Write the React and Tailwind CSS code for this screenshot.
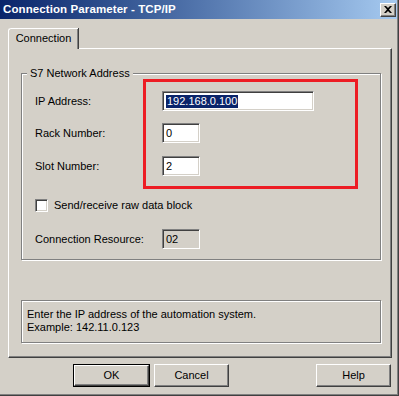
import React from "react";

const FONT = "font-['Liberation_Sans',Arial,sans-serif]";

function Sunken({ className = "", children }) {
  return (
    <div
      className={`border border-t-[#808080] border-l-[#808080] border-r-white border-b-white shadow-[inset_1px_1px_0_#404040,inset_-1px_-1px_0_#d4d0c8] ${className}`}
    >
      {children}
    </div>
  );
}

function Button({ label, wide = false }) {
  return (
    <button
      type="button"
      className={`flex h-[23px] ${wide ? "w-[75px]" : "w-[75px]"} items-center justify-center border border-t-white border-l-white border-r-[#404040] border-b-[#404040] bg-[#d4d0c8] text-[11px] text-black shadow-[inset_-1px_-1px_0_#808080]`}
    >
      {label}
    </button>
  );
}

export default function App() {
  return (
    <div
      className={`${FONT} flex h-[396px] w-[399px] flex-col overflow-hidden border-r border-b border-[#404040] bg-[#d4d0c8] text-[11px] leading-[13px] text-black shadow-[inset_-1px_-1px_0_#808080]`}
    >
      {/* title bar */}
      <div className="mr-[1px] flex h-[19px] shrink-0 items-center justify-between bg-linear-to-r from-[#0a246a] to-[#a6caf0] pl-[3px] pr-[1px]">
        <span className="text-[11.5px] font-bold tracking-[0.1px] text-white">
          Connection Parameter - TCP/IP
        </span>
        <div className="flex h-[14px] w-[16px] items-center justify-center border border-t-white border-l-white border-r-[#404040] border-b-[#404040] bg-[#d4d0c8] shadow-[inset_-1px_-1px_0_#808080]">
          <svg width="8" height="7" viewBox="0 0 8 7">
            <path d="M0 0h2l2 2 2-2h2L5 3.5 8 7H6L4 5 2 7H0l3-3.5z" fill="#000" />
          </svg>
        </div>
      </div>

      {/* tab strip */}
      <div className="ml-[8px] mt-[9px] flex">
        <div className="relative z-10 -mb-px flex h-[21px] w-[70px] items-center justify-center rounded-tl-[3px] border-l border-t border-white bg-[#d4d0c8] pb-[2px] shadow-[inset_-1px_0_0_#808080] [box-shadow:inset_-1px_0_0_#808080,1px_0_0_#404040]">
          Connection
        </div>
      </div>

      {/* tab panel */}
      <div className="ml-[8px] flex h-[310px] w-[384px] shrink-0 flex-col border border-t-white border-l-white border-r-[#404040] border-b-[#404040] shadow-[inset_-1px_-1px_0_#808080]">
        {/* group box */}
        <div className="relative ml-[12px] mt-[24px] h-[187px] w-[360px] border border-[#808080] pl-[13px] pt-[17px] shadow-[inset_1px_1px_0_#fff,1px_1px_0_#fff]">
          <span className="absolute -top-[7px] left-[5px] bg-[#d4d0c8] px-[3px]">S7 Network Address</span>

          <div className="flex h-[20px] items-center">
            <span className="w-[127px]">IP Address:</span>
            <Sunken className="flex h-[20px] w-[152px] items-center bg-white pl-[3px]">
              <span className="bg-[#0a246a] px-px text-white">192.168.0.100</span>
            </Sunken>
          </div>

          <div className="mt-[12px] flex h-[20px] items-center">
            <span className="w-[127px]">Rack Number:</span>
            <Sunken className="flex h-[20px] w-[38px] items-center bg-white pl-[3px]">0</Sunken>
          </div>

          <div className="mt-[13px] flex h-[20px] items-center">
            <span className="w-[127px]">Slot Number:</span>
            <Sunken className="flex h-[20px] w-[38px] items-center bg-white pl-[3px]">2</Sunken>
          </div>

          <div className="mt-[23px] flex h-[13px] items-center">
            <Sunken className="h-[13px] w-[13px] bg-white" />
            <span className="ml-[6px]">Send/receive raw data block</span>
          </div>

          <div className="mt-[17px] flex h-[20px] items-center">
            <span className="w-[127px]">Connection Resource:</span>
            <Sunken className="flex h-[20px] w-[38px] items-center pl-[3px]">02</Sunken>
          </div>

          {/* highlight annotation */}
          <div className="absolute left-[121px] top-[5px] h-[110px] w-[215px] border-[3px] border-[#ed1c24]" />
        </div>

        {/* info box */}
        <div className="ml-[12px] mt-[40px] h-[43px] w-[360px] border border-[#808080] pl-[5px] pt-[7px] shadow-[inset_1px_1px_0_#fff,1px_1px_0_#fff]">
          <div>Enter the IP address of the automation system.</div>
          <div>Example: 142.11.0.123</div>
        </div>
      </div>

      {/* buttons */}
      <div className="mt-[6px] flex">
        <div className="ml-[73px] border border-black">
          <button
            type="button"
            className="flex h-[21px] w-[75px] items-center justify-center border border-t-white border-l-white border-r-[#404040] border-b-[#404040] bg-[#d4d0c8] text-[11px] shadow-[inset_-1px_-1px_0_#808080]"
          >
            OK
          </button>
        </div>
        <div className="ml-[4px]">
          <Button label="Cancel" />
        </div>
        <div className="ml-[87px]">
          <Button label="Help" />
        </div>
      </div>
    </div>
  );
}
